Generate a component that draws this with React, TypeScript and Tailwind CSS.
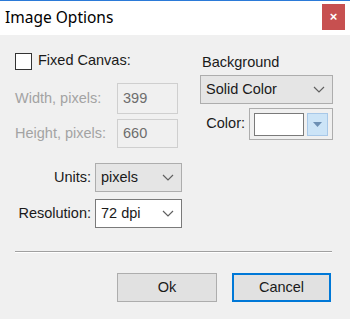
import React from "react";

const Chevron = () => (
  <svg width="12" height="7" viewBox="0 0 12 7">
    <polyline points="1,1 6,6 11,1" fill="none" stroke="#606060" strokeWidth="1.2" />
  </svg>
);

const Select = ({ value, white, className }: { value: string; white?: boolean; className: string }) => (
  <div
    className={`flex items-center justify-between border pl-[5px] pr-[7px] ${
      white ? "bg-white border-[#7a7a7a]" : "bg-[#e5e5e5] border-[#adadad]"
    } ${className}`}
  >
    <span>{value}</span>
    <Chevron />
  </div>
);

export default function App() {
  return (
    <div className="w-[350px] h-[319px] flex flex-col bg-[#f0f0f0] font-['Liberation_Sans',Arial,sans-serif] text-[14.5px] text-[#1a1a1a] overflow-hidden">
      {/* title bar */}
      <div className="h-[35px] shrink-0 bg-white border-t border-[#2b7ad8] flex items-center justify-between pl-[5px] pr-[5px]">
        <span className="font-['Noto_Sans',sans-serif] text-[15.5px] text-black -mt-[1px]">Image Options</span>
        <div className="w-[23px] h-[26px] -mt-[3px] bg-[#c75050] flex items-center justify-center text-white text-[13px] font-bold leading-none">
          ×
        </div>
      </div>

      <div className="flex">
        {/* left column */}
        <div className="w-[185px] pl-[15px] pt-[16px] flex flex-col">
          <div className="flex items-center h-[20px]">
            <div className="w-[17px] h-[17px] border border-[#333] bg-white" />
            <span className="ml-[6px]">Fixed Canvas:</span>
          </div>
          <div className="flex items-center mt-[12px]">
            <span className="w-[102px] text-[#a3a3a3]">Width, pixels:</span>
            <div className="w-[61px] h-[31px] border border-[#cfcfcf] flex items-center pl-[5px] text-[#6d6d6d]">399</div>
          </div>
          <div className="flex items-center mt-[5px]">
            <span className="w-[102px] text-[#a3a3a3]">Height, pixels:</span>
            <div className="w-[61px] h-[29px] border border-[#cfcfcf] flex items-center pl-[5px] text-[#6d6d6d]">660</div>
          </div>
          <div className="flex items-center mt-[15px]">
            <span className="w-[76px] text-right">Units:</span>
            <Select value="pixels" className="ml-[4px] w-[87px] h-[29px]" />
          </div>
          <div className="flex items-center mt-[7px]">
            <span className="w-[76px] text-right whitespace-nowrap">Resolution:</span>
            <Select value="72 dpi" white className="ml-[4px] w-[87px] h-[29px]" />
          </div>
        </div>

        {/* right column */}
        <div className="w-[133px] ml-[15px] pt-[17px] flex flex-col">
          <span className="pl-[2px] h-[20px] leading-[20px]">Background</span>
          <Select value="Solid Color" className="mt-[3px] w-[133px] h-[29px]" />
          <div className="flex items-center mt-[4px]">
            <span className="w-[45px] text-right">Color:</span>
            <div className="ml-[4px] w-[84px] h-[32px] border border-[#adadad] flex items-center pl-[4px] gap-[3px]">
              <div className="w-[50px] h-[23px] bg-white border border-[#7a7a7a]" />
              <div className="w-[21px] h-[23px] bg-[#cce4f7] border border-[#a8c8e8] flex items-center justify-center">
                <svg width="9" height="5" viewBox="0 0 9 5">
                  <polygon points="0,0 9,0 4.5,5" fill="#6c8fb3" />
                </svg>
              </div>
            </div>
          </div>
        </div>
      </div>

      {/* separator */}
      <div className="mt-auto mx-[15px] w-[317px] border-t border-[#a0a0a0] border-b-white border-b mb-[20px]" />

      {/* buttons */}
      <div className="flex pl-[117px] gap-[15px] mb-[17px]">
        <div className="w-[100px] h-[29px] bg-[#e1e1e1] border border-[#adadad] flex items-center justify-center">Ok</div>
        <div className="w-[99px] h-[29px] bg-[#e1e1e1] border-2 border-[#0078d7] flex items-center justify-center">Cancel</div>
      </div>
    </div>
  );
}
